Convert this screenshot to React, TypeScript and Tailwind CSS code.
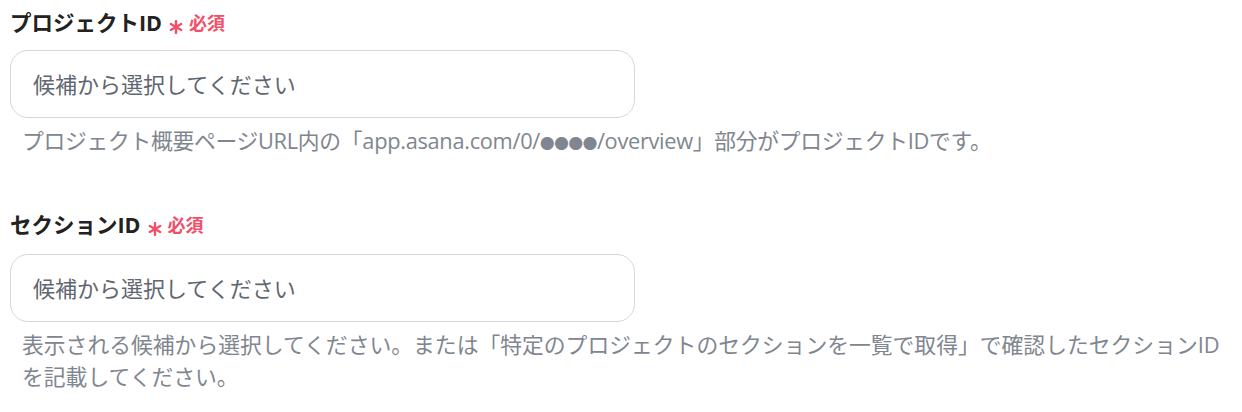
import React from "react";

const font = { fontFamily: '"Open Sans", "Noto Sans CJK JP", sans-serif' };

function Asterisk() {
  return (
    <svg width="14" height="14" viewBox="0 0 14 14" className="ml-[7px] mt-[8px]" aria-hidden="true">
      <g stroke="#f0506a" strokeWidth="2.4" strokeLinecap="round">
        <line x1="7" y1="1" x2="7" y2="13" />
        <line x1="1.8" y1="4" x2="12.2" y2="10" />
        <line x1="1.8" y1="10" x2="12.2" y2="4" />
      </g>
    </svg>
  );
}

function Label({ text }: { text: string }) {
  return (
    <div className="flex h-[32px] items-center">
      <span className="text-[21.5px] font-bold leading-[32px] text-[#222]">{text}</span>
      <Asterisk />
      <span className="ml-[6px] text-[18px] font-bold leading-[32px] text-[#f0506a]">必須</span>
    </div>
  );
}

function SelectBox() {
  return (
    <div className="flex h-[68px] w-[625px] items-center rounded-[18px] border border-[#d3d7dd] bg-white px-[22px]">
      <span className="text-[22px] text-[#5f6670]">候補から選択してください</span>
    </div>
  );
}

export default function App() {
  return (
    <div className="min-h-[412px] w-[1242px] bg-white pl-[10px] pt-[7px]" style={font}>
      <section>
        <Label text="プロジェクトID" />
        <div className="mt-[11px]">
          <SelectBox />
        </div>
        <p className="mt-[7px] pl-[12px] text-[21.8px] leading-[32px] tracking-[-0.3px] text-[#80868f]">
          プロジェクト概要ページURL内の「app.asana.com/0/<span className="text-[14.5px]">●●●●</span>/overview」部分がプロジェクトIDです。
        </p>
      </section>
      <section className="mt-[49px]">
        <Label text="セクションID" />
        <div className="mt-[13px]">
          <SelectBox />
        </div>
        <p className="mt-[7px] w-[1222px] pl-[12px] text-[21.8px] leading-[32px] text-[#80868f]">
          表示される候補から選択してください。または「特定のプロジェクトのセクションを一覧で取得」で確認したセクションIDを記載してください。
        </p>
      </section>
    </div>
  );
}
